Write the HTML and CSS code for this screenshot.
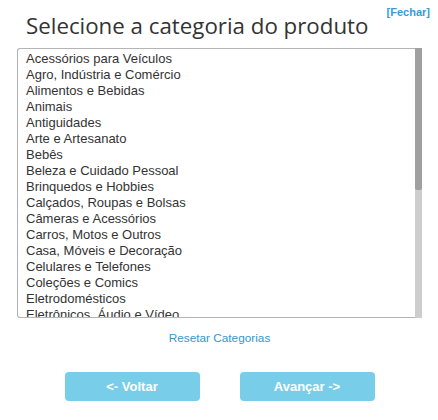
FILE: index.html
```html
<!DOCTYPE html>
<html lang="pt-BR">
<head>
<meta charset="UTF-8" />
<meta name="viewport" content="width=device-width, initial-scale=1" />
<title>Selecione a categoria do produto</title>
<link rel="stylesheet" href="styles.css">
</head>
<body>

<div class="modal">
  <a class="close-link" href="#">[Fechar]</a>
  <h2 class="modal-title">Selecione a categoria do produto</h2>

  <div class="category-box">
    <div class="category-list">
      <div class="item">Acessórios para Veículos</div>
      <div class="item">Agro, Indústria e Comércio</div>
      <div class="item">Alimentos e Bebidas</div>
      <div class="item">Animais</div>
      <div class="item">Antiguidades</div>
      <div class="item">Arte e Artesanato</div>
      <div class="item">Bebês</div>
      <div class="item">Beleza e Cuidado Pessoal</div>
      <div class="item">Brinquedos e Hobbies</div>
      <div class="item">Calçados, Roupas e Bolsas</div>
      <div class="item">Câmeras e Acessórios</div>
      <div class="item">Carros, Motos e Outros</div>
      <div class="item">Casa, Móveis e Decoração</div>
      <div class="item">Celulares e Telefones</div>
      <div class="item">Coleções e Comics</div>
      <div class="item">Eletrodomésticos</div>
      <div class="item">Eletrônicos, Áudio e Vídeo</div>
      <div class="item">Esportes e Fitness</div>
      <div class="item">Ferramentas e Construção</div>
      <div class="item">Festas e Lembrancinhas</div>
      <div class="item">Games</div>
      <div class="item">Imóveis</div>
      <div class="item">Indústria e Comércio</div>
      <div class="item">Informática</div>
      <div class="item">Ingressos</div>
      <div class="item">Instrumentos Musicais</div>
      <div class="item">Joias e Relógios</div>
      <div class="item">Livros, Revistas e Comics</div>
      <div class="item">Música, Filmes e Seriados</div>
      <div class="item">Saúde</div>
      <div class="item">Serviços</div>
      <div class="item">Mais Categorias</div>
    </div>
    <div class="scrollbar"><div class="scroll-thumb"></div></div>
  </div>

  <div class="reset-row">
    <a class="reset-link" href="#">Resetar Categorias</a>
  </div>

  <div class="actions">
    <button class="btn" disabled>&lt;- Voltar</button>
    <button class="btn" disabled>Avançar -&gt;</button>
  </div>
</div>

</body>
</html>
```

FILE: styles.css
```css
/* --- Geral --- */
body {
  margin: 0;
  padding: 0;
  background: #fff;
  font-family: "Liberation Sans", Arial, sans-serif;
  color: #333;
}
.modal {
  position: relative;
  width: 438px;
  padding-top: 9px;
}

/* Título e fechar */
.modal-title {
  margin: 0 0 6px 26px;
  font-family: "Open Sans", sans-serif;
  font-size: 22.3px;
  font-weight: 400;
  line-height: 33px;
  color: #333;
}
.close-link {
  position: absolute;
  top: 6px;
  right: 8px;
  font-size: 11px;
  font-weight: bold;
  color: #3a9ad9;
  text-decoration: none;
}

/* Lista de categorias */
.category-box {
  display: flex;
  margin-left: 17px;
  width: 405px;
  height: 270px;
}
.category-list {
  flex: 1;
  overflow: hidden;
  padding-top: 2px;
  border: 1px solid #b4b4b4;
  border-right: none;
  border-radius: 3px 0 0 3px;
  font-size: 13px;
  line-height: 16px;
  color: #333;
}
.category-list .item {
  padding-left: 8px;
  white-space: nowrap;
}
.scrollbar {
  width: 7px;
  background: #cdcdcd;
}
.scroll-thumb {
  height: 142px;
  background: #a0a0a0;
  border-radius: 0 0 2px 2px;
}

/* Resetar */
.reset-row {
  text-align: center;
  margin-top: 10px;
  padding-left: 1px;
}
.reset-link {
  font-size: 11.8px;
  color: #3796cc;
  text-decoration: none;
}

/* Botões */
.actions {
  display: flex;
  justify-content: center;
  gap: 40px;
  margin-top: 26px;
  padding-left: 1px;
}
.btn {
  width: 135px;
  height: 29px;
  border: none;
  border-radius: 4px;
  background-color: #78cee9;
  color: #fff;
  font-family: "Liberation Sans", Arial, sans-serif;
  font-size: 13px;
  font-weight: bold;
  cursor: not-allowed;
}
```
